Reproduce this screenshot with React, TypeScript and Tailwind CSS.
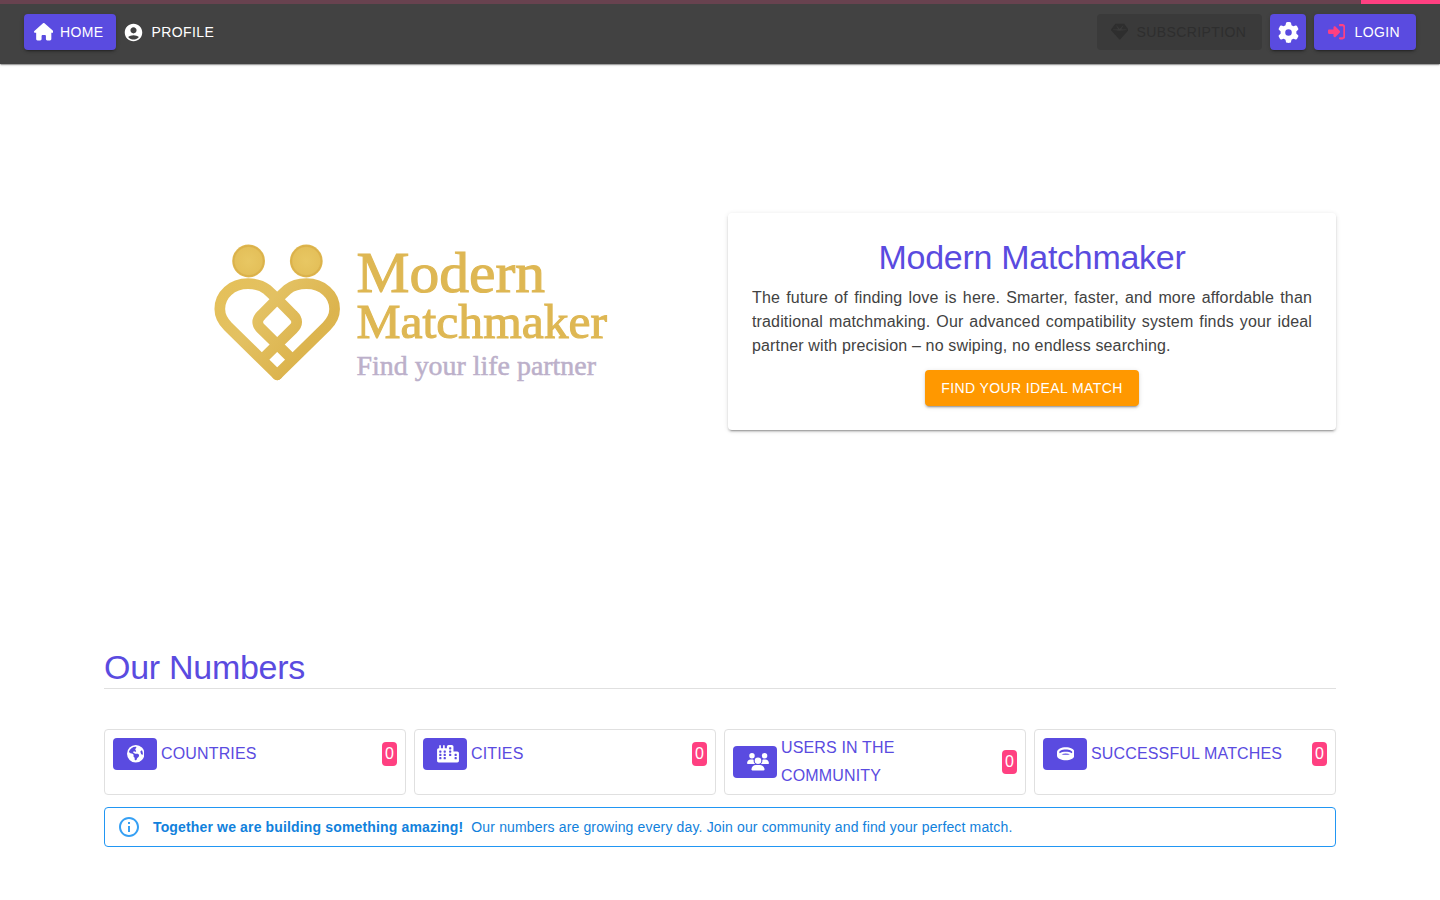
import { FaHouse, FaGear, FaGem, FaRightToBracket, FaEarthAmericas, FaCity, FaUsers, FaRing } from "react-icons/fa6";
import type { ReactNode } from "react";

const raised =
  "shadow-[0_3px_1px_-2px_rgba(0,0,0,0.2),0_2px_2px_0_rgba(0,0,0,0.14),0_1px_5px_0_rgba(0,0,0,0.12)]";

function AccountIcon() {
  return (
    <svg viewBox="0 0 24 24" className="size-[21px] shrink-0" fill="currentColor">
      <path d="M12 2C6.48 2 2 6.48 2 12s4.48 10 10 10 10-4.48 10-10S17.52 2 12 2zm0 4c1.93 0 3.5 1.57 3.5 3.5S13.93 13 12 13s-3.5-1.57-3.5-3.5S10.07 6 12 6zm0 14c-2.03 0-4.43-.82-6.14-2.88C7.55 15.8 9.68 15 12 15s4.45.8 6.14 2.12C16.43 19.18 14.03 20 12 20z" />
    </svg>
  );
}

function InfoIcon() {
  return (
    <svg viewBox="0 0 24 24" className="size-6 shrink-0" fill="#2196f3" opacity="0.9">
      <path d="M11 7h2v2h-2zm0 4h2v6h-2zm1-9C6.48 2 2 6.48 2 12s4.48 10 10 10 10-4.48 10-10S17.52 2 12 2zm0 18c-4.41 0-8-3.59-8-8s3.59-8 8-8 8 3.59 8 8-3.59 8-8 8z" />
    </svg>
  );
}

function Logo() {
  return (
    <svg viewBox="208 223 400 180" className="h-[180px] w-[400px]">
      <defs>
        <linearGradient id="gold" gradientUnits="userSpaceOnUse" x1="215" y1="280" x2="340" y2="380">
          <stop offset="0" stopColor="#e5c058" />
          <stop offset="0.35" stopColor="#e3c162" />
          <stop offset="0.7" stopColor="#dcb44e" />
          <stop offset="1" stopColor="#e0b952" />
        </linearGradient>
        <radialGradient id="head">
          <stop offset="0" stopColor="#e8c763" />
          <stop offset="0.82" stopColor="#e4c05a" />
          <stop offset="0.9" stopColor="#dab04a" />
          <stop offset="1" stopColor="#e0b950" />
        </radialGradient>
      </defs>
      <circle cx="248.6" cy="261" r="16.4" fill="url(#head)" />
      <circle cx="306.3" cy="261" r="16.4" fill="url(#head)" />
      <g fill="none" stroke="url(#gold)" strokeWidth="10.7" strokeLinejoin="round" strokeLinecap="round">
        <path d="M277.200 374.800 L228 326.500 C222.500 321 219.800 316 219.800 309 C219.800 294.500 232 283.700 248 283.700 C256 283.700 262 285.500 267 289.500 L277.200 299 L293 315 Q300.400 322 293 329 L277.200 344.500 L263 358.500" />
        <path d="M277.200 374.800 L326.400 326.500 C331.900 321 334.600 316 334.600 309 C334.600 294.500 322.400 283.700 306.400 283.700 C298.400 283.700 292.400 285.500 287.400 289.500 L277.200 299 L261.400 315 Q254 322 261.400 329 L277.200 344.500 L291.400 358.500" />
      </g>
      <g fontFamily="Liberation Serif, serif">
        <g fill="#deb753" stroke="#deb753" strokeWidth="1.1">
          <text x="356.500" y="291.500" fontSize="58" textLength="188.500" lengthAdjust="spacingAndGlyphs">Modern</text>
          <text x="356.500" y="337.500" fontSize="49.500" textLength="250.500" lengthAdjust="spacingAndGlyphs">Matchmaker</text>
        </g>
        <text x="356.500" y="374.500" fontSize="26.500" textLength="239.500" lengthAdjust="spacingAndGlyphs" fill="#bcb0ca" stroke="#bcb0ca" strokeWidth="0.5">
          Find your life partner
        </text>
      </g>
    </svg>
  );
}

function Stat({ icon, label }: { icon: ReactNode; label: string }) {
  return (
    <div className="h-[66px] rounded border border-[#e0e0e0] px-2 py-1">
      <div className="flex min-h-10 items-center">
        <div className="flex h-8 w-11 shrink-0 items-center rounded bg-[#5a4be0] pl-[13.500px] text-white">{icon}</div>
        <div className="ml-1 max-w-[205px] text-base leading-7 tracking-[0.15px] text-[#5a4be0] uppercase">{label}</div>
        <div className="ml-auto flex h-6 w-[15px] items-center justify-center rounded bg-[#ff4081] text-base text-white">
          0
        </div>
      </div>
    </div>
  );
}

export default function App() {
  return (
    <div className="h-[900px] overflow-hidden bg-white font-['Liberation_Sans',sans-serif]">
      <header className="relative h-16 bg-[#424242] shadow-[0_2px_1px_-1px_rgba(0,0,0,0.2),0_1px_1px_0_rgba(0,0,0,0.14),0_1px_3px_0_rgba(0,0,0,0.12)]">
        <div className="absolute inset-x-0 top-0 flex h-1 bg-[#68424f]">
          <div className="ml-auto w-[79px] bg-[#ff4081]" />
        </div>
        <nav className="flex h-16 items-center px-6 text-sm tracking-[0.4px] text-white uppercase">
          <a className={`flex h-9 w-[92px] items-center rounded bg-[#5a4be0] pl-[9.500px] ${raised}`}>
            <FaHouse className="mr-[7px] h-[17.500px] w-[19.500px]" />
            Home
          </a>
          <a className="ml-[7px] flex h-9 items-center gap-[7.500px]">
            <AccountIcon />
            Profile
          </a>
          <div className="ml-auto flex gap-2">
            <button className="flex h-9 w-[165px] items-center rounded bg-[#3a3a3a] pl-[13.500px] text-[#2e2e2e] uppercase">
              <FaGem className="mr-[8.500px] size-[17.500px]" />
              Subscription
            </button>
            <button className={`flex size-9 items-center justify-center rounded bg-[#5a4be0] ${raised}`}>
              <FaGear className="size-[21px]" />
            </button>
            <button className={`flex h-9 w-[102px] items-center rounded bg-[#5a4be0] pl-[13.500px] uppercase ${raised}`}>
              <FaRightToBracket className="mr-[9.500px] size-[17.500px] text-[#ff4081]" />
              Login
            </button>
          </div>
        </nav>
      </header>

      <main className="px-[104px]">
        <section className="grid h-[582px] grid-cols-2 gap-4 pt-[149px]">
          <div className="flex justify-center pt-[10px]">
            <Logo />
          </div>
          <div className={`flex h-[217px] flex-col items-center rounded px-6 pt-[23px] pb-6 ${raised}`}>
            <h1 className="text-[34px] leading-[42px] tracking-[-0.28px] text-[#5a4be0]">Modern Matchmaker</h1>
            <p className="mt-2 text-justify text-base leading-6 tracking-[0.15px] text-[#424242]">
              The future of finding love is here. Smarter, faster, and more affordable than traditional matchmaking. Our
              advanced compatibility system finds your ideal partner with precision – no swiping, no endless searching.
            </p>
            <button className={`mt-3 h-9 w-[214px] rounded bg-[#ff9800] text-sm tracking-[0.4px] text-white uppercase ${raised}`}>
              Find your ideal match
            </button>
          </div>
        </section>

        <section>
          <h2 className="border-b border-[#e0e0e0] text-[34px] leading-[42px] tracking-[-0.28px] text-[#5a4be0]">Our Numbers</h2>
          <div className="mt-10 grid grid-cols-4 gap-2">
            <Stat icon={<FaEarthAmericas className="size-[17.500px]" />} label="Countries" />
            <Stat icon={<FaCity className="h-[17.500px] w-[22px]" />} label="Cities" />
            <Stat icon={<FaUsers className="h-[17.500px] w-[22px]" />} label="Users in the community" />
            <Stat icon={<FaRing className="size-[17.500px]" />} label="Successful matches" />
          </div>
          <div className="mt-3 flex h-10 items-center rounded border border-[#2196f3] pl-3 text-sm tracking-[0.15px] text-[#1181dc]">
            <InfoIcon />
            <strong className="ml-3 font-bold">Together we are building something amazing!</strong>
            <span className="ml-2">Our numbers are growing every day. Join our community and find your perfect match.</span>
          </div>
        </section>
      </main>
    </div>
  );
}
